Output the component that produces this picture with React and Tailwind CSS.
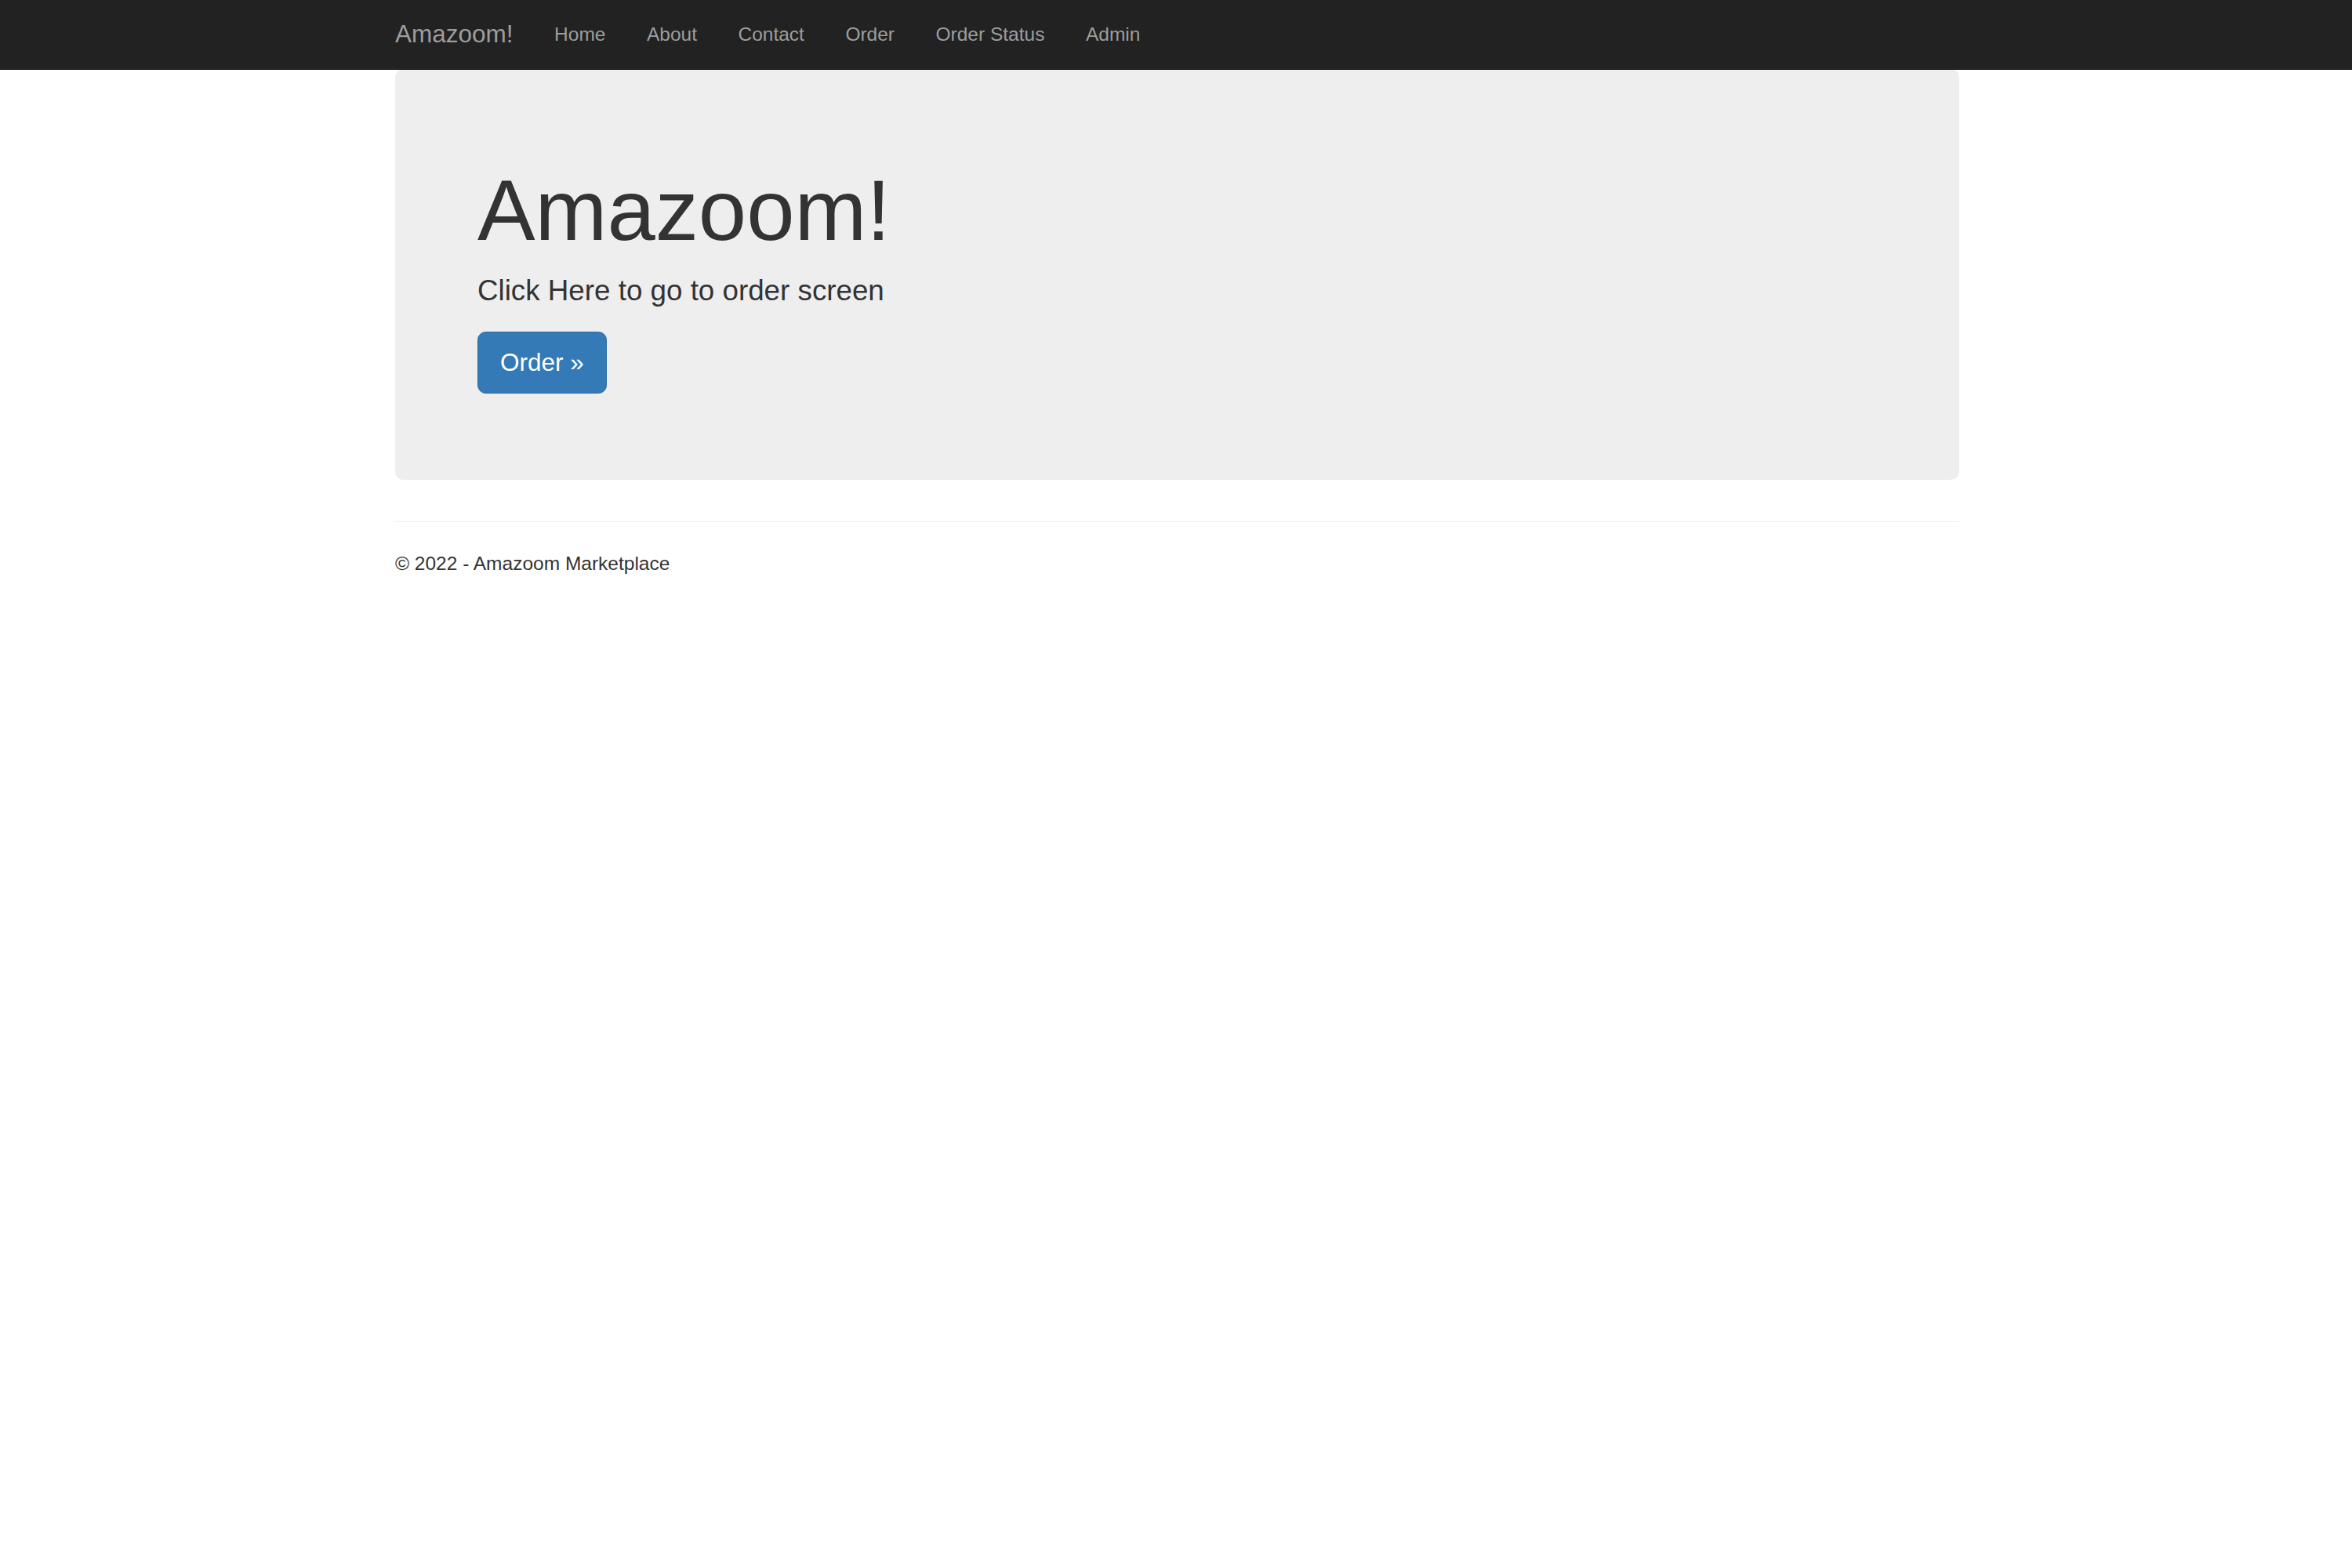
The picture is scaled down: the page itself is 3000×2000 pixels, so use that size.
export default function App() {

    const links = ["Home", "About", "Contact", "Order", "Order Status", "Admin"]

    return (
        <div className="min-h-screen bg-white text-[#333] font-['Liberation_Sans',Arial,Helvetica,sans-serif]">

            {/* NAVBAR */}

            <nav className="relative z-10 bg-[#222] border-b-[1.75px] border-[#080808] h-[89.25px]">
                <div className="w-[2047.5px] mx-auto pl-[27.75px] pr-[24.75px] flex">
                    <a className="-ml-[26.25px] px-[26.25px] py-[26.25px] h-[87.5px] text-[31.5px] leading-[35px] text-[#9d9d9d]">
                        Amazoom!
                    </a>
                    <ul className="flex">
                        {links.map((l) => (
                            <li key={l}>
                                <a className="block px-[26.25px] py-[26.25px] text-[24.5px] leading-[35px] text-[#9d9d9d]">
                                    {l}
                                </a>
                            </li>
                        ))}
                    </ul>
                </div>
            </nav>

            {/* BODY */}

            <div className="w-[2047.5px] mx-auto pl-[27.75px] pr-[24.75px] -mt-[1.75px]">

                <div className="bg-[#eee] rounded-[10.5px] px-[105px] pt-[84px] pb-[84px] mb-[52.5px]">
                    <h1 className="mt-[35px] mb-[17.5px] text-[110.25px] leading-[1.1] font-normal">
                        Amazoom!
                    </h1>
                    <p className="mb-[26.25px] text-[36.75px] leading-[1.4]">
                        Click Here to go to order screen
                    </p>
                    <p className="mb-[26.25px]">
                        <a className="inline-block bg-[#337ab7] border-[1.75px] border-[#2e6da4] rounded-[10.5px] px-[28px] py-[17.5px] text-[31.5px] leading-[42px] text-white">
                            Order »
                        </a>
                    </p>
                </div>

                <hr className="border-0 border-t-[1.75px] border-[#eee] mb-[35px]" />

                <footer>
                    <p className="text-[24.5px] leading-[35px] mb-[17.5px]">
                        © 2022 - Amazoom Marketplace
                    </p>
                </footer>

            </div>

        </div>
    )
}
